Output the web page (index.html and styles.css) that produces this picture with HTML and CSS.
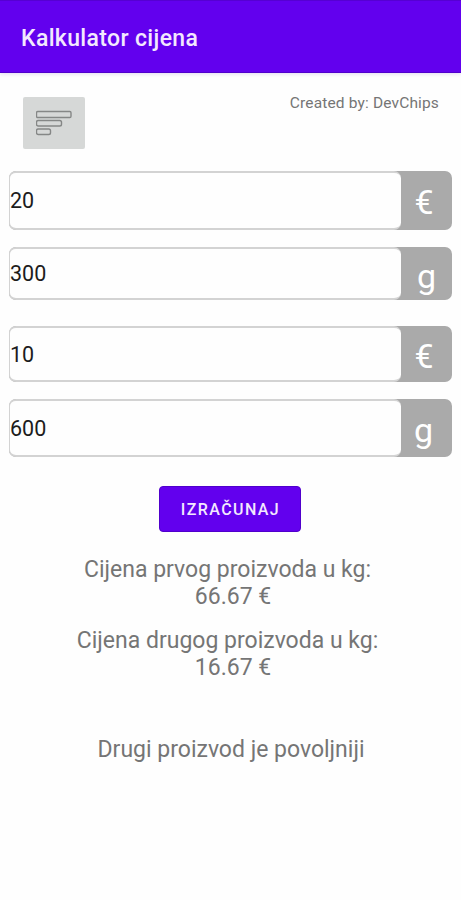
FILE: index.html
```html
<!DOCTYPE html>
<html lang="hr">
<head>
    <meta charset="UTF-8">
    <meta name="viewport" content="width=device-width, initial-scale=1.0">
    <title>Kalkulator cijena</title>
    <link rel="stylesheet" href="styles.css">
</head>
<body>
    <header class="bar">
        <h1 class="title">Kalkulator cijena</h1>
    </header>
    <div class="top">
        <button type="button" class="menu" aria-label="Izbornik">
            <svg width="37" height="26" viewBox="0 0 37 26" fill="none" stroke="#858786" stroke-width="1.4">
                <rect x="0.5" y="1.5" width="34.5" height="6" rx="1.2"/>
                <rect x="0.5" y="10.5" width="25" height="5.5" rx="1.8"/>
                <rect x="0.5" y="19" width="14" height="5.5" rx="1.8"/>
            </svg>
        </button>
        <div class="author">Created by: DevChips</div>
    </div>
    <form class="form" action="javascript:void(0)">
        <div class="row price1">
            <input type="text" class="field" id="cijena1" value="20">
            <span class="unit">€</span>
        </div>
        <div class="row weight1">
            <input type="text" class="field" id="masa1" value="300">
            <span class="unit gram">g</span>
        </div>
        <div class="row price2">
            <input type="text" class="field" id="cijena2" value="10">
            <span class="unit">€</span>
        </div>
        <div class="row weight2">
            <input type="text" class="field" id="masa2" value="600">
            <span class="unit gram2">g</span>
        </div>
        <button type="submit" class="button" id="izracunaj">IZRAČUNAJ</button>
    </form>
    <div class="results">
        <p class="result first">Cijena prvog proizvoda u kg:<br><span class="amount">66.67 €</span></p>
        <p class="result second">Cijena drugog proizvoda u kg:<br><span class="amount">16.67 €</span></p>
        <p class="result best">Drugi proizvod je povoljniji</p>
    </div>
</body>
</html>
```

FILE: styles.css
```css
*{
    box-sizing: border-box;
}
body{
    margin: 0;
    min-height: 900px;
    background-color: #fefefe;
    font-family: Roboto, "Liberation Sans", sans-serif;
    color: #757575;
}
.bar{
    height: 73px;
    padding: 3px 21px 0;
    display: flex;
    align-items: center;
    background-color: #6200ee;
    border-top: 1px solid #5600d2;
    border-bottom: 1px solid #5000cc;
    box-shadow: 0 1px 4px rgba(60, 0, 160, 0.15);
}
.title{
    margin: 0;
    font-size: 23px;
    font-weight: 500;
    letter-spacing: 0.35px;
    color: #f3e8fe;
}
.top{
    height: 98px;
    padding: 24px 22px 0 23px;
    display: flex;
    justify-content: space-between;
    align-items: flex-start;
}
.menu{
    width: 62px;
    height: 52px;
    padding: 0;
    display: flex;
    align-items: center;
    justify-content: center;
    background-color: #d6d8d7;
    border: none;
    border-radius: 2px;
}
.author{
    margin-top: -4px;
    font-size: 15.5px;
    line-height: 20px;
    letter-spacing: 0.15px;
}
.form{
    padding: 0 9px;
    display: flex;
    flex-direction: column;
}
.row{
    display: flex;
    background-color: #aaaaaa;
    border-radius: 7px;
}
.price1{
    height: 59px;
}
.weight1{
    height: 53px;
    margin-top: 17px;
}
.price2{
    height: 56px;
    margin-top: 26px;
}
.weight2{
    height: 58px;
    margin-top: 17px;
}
.field{
    width: 392px;
    min-width: 0;
    padding: 0;
    background-color: #fefefe;
    border: 2px solid #d3d3d3;
    border-left-width: 1px;
    border-right: none;
    border-radius: 7px;
    font-family: inherit;
    font-size: 21.5px;
    color: #1c1c1c;
    outline: none;
}
.unit{
    flex: 1;
    display: flex;
    align-items: center;
    justify-content: center;
    padding: 3px 5px 0 0;
    font-size: 34px;
    line-height: 38px;
    color: #fff;
}
.gram{
    padding-right: 0;
    padding-top: 5px;
}
.gram2{
    padding-right: 6px;
    padding-top: 4px;
}
.button{
    width: 142px;
    height: 46px;
    margin: 29px 0 0 150px;
    padding: 1px 0 0 1px;
    background-color: #6200ee;
    border: 1px solid #5000cc;
    border-radius: 4px;
    font-family: inherit;
    font-size: 16px;
    font-weight: 500;
    letter-spacing: 1.4px;
    color: #f3e8fe;
}
.results{
    padding: 24px 6px 0 0;
    text-align: center;
}
.result{
    margin: 0;
    font-size: 23px;
    line-height: 27px;
}
.amount{
    padding-left: 11px;
}
.second{
    margin-top: 17px;
}
.best{
    margin-top: 55px;
    padding-left: 7px;
}
```
